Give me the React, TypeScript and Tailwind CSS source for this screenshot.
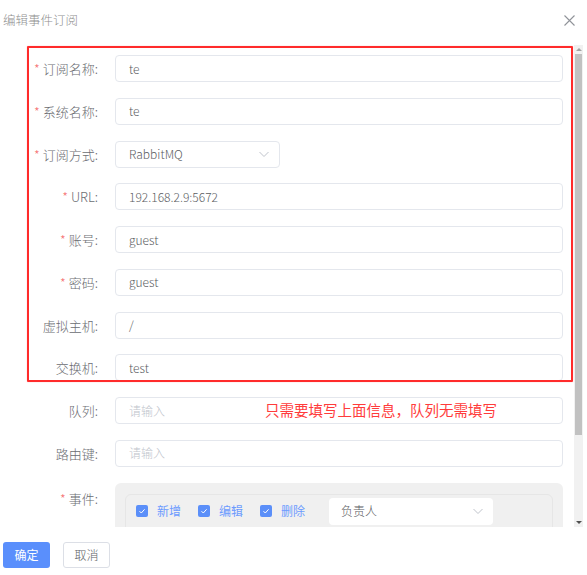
import React from "react";

const font = { fontFamily: '"Noto Sans CJK SC", "Noto Sans", sans-serif' };

function Label({ text, required }: { text: string; required?: boolean }) {
  return (
    <div className="w-[115px] shrink-0 pr-[17px] text-right text-[13px] font-light leading-[27px] text-[#6b6d72]">
      {required && <span className="mr-[3px] text-[#f56c6c]">*</span>}
      {text}:
    </div>
  );
}

function Chevron({ className }: { className?: string }) {
  return (
    <svg className={className} width="12" height="12" viewBox="0 0 12 12" fill="none">
      <path d="M1.5 4 L6 8.5 L10.5 4" stroke="#c0c4cc" strokeWidth="1" />
    </svg>
  );
}

function InputRow({
  label,
  required,
  value,
  placeholder,
  children,
}: {
  label: string;
  required?: boolean;
  value?: string;
  placeholder?: string;
  children?: React.ReactNode;
}) {
  return (
    <div className="flex items-start">
      <Label text={label} required={required} />
      <div className="relative flex h-[27px] w-[448px] items-center rounded-[4px] border border-[#e4e7ed] bg-white px-[13px] text-[12px] font-light">
        {value ? (
          <span className="text-[#5a5c61]">{value}</span>
        ) : (
          <span className="text-[#c0c4cc]">{placeholder}</span>
        )}
        {children}
      </div>
    </div>
  );
}

function Check({ text }: { text: string }) {
  return (
    <div className="flex items-center">
      <div className="flex h-[12px] w-[12px] items-center justify-center rounded-[2px] bg-[#5b8ff9]">
        <svg width="8" height="8" viewBox="0 0 8 8" fill="none">
          <path d="M1.5 4.2 L3.3 6 L6.6 2.3" stroke="white" strokeWidth="1" />
        </svg>
      </div>
      <span className="ml-[9px] text-[12px] text-[#6c9bff]">{text}</span>
    </div>
  );
}

export default function App() {
  return (
    <div className="relative h-[575px] w-[587px] overflow-hidden bg-white" style={font}>
      {/* header */}
      <div className="flex h-[45px] items-start justify-between pt-[11px] pl-[3px] pr-[12px]">
        <span className="text-[12.5px] font-light leading-[18px] text-[#8f8f8f]">编辑事件订阅</span>
        <svg className="mt-[4px]" width="11" height="11" viewBox="0 0 11 11" fill="none">
          <path d="M0.5 0.5 L10.5 10.5 M10.5 0.5 L0.5 10.5" stroke="#909399" strokeWidth="1.1" />
        </svg>
      </div>

      {/* body */}
      <div className="flex h-[482px]">
        <div className="relative w-[574px] overflow-hidden">
          <div className="flex flex-col gap-[15.78px] pt-[10px]">
            <InputRow label="订阅名称" required value="te" />
            <InputRow label="系统名称" required value="te" />
            <div className="flex items-start">
              <Label text="订阅方式" required />
              <div className="flex h-[27px] w-[165px] items-center justify-between rounded-[4px] border border-[#e4e7ed] bg-white pl-[13px] pr-[9px] text-[12px] font-light text-[#5a5c61]">
                <span>RabbitMQ</span>
                <Chevron />
              </div>
            </div>
            <InputRow label="URL" required value="192.168.2.9:5672" />
            <InputRow label="账号" required value="guest" />
            <InputRow label="密码" required value="guest" />
            <InputRow label="虚拟主机" value="/" />
            <InputRow label="交换机" value="test" />
            <InputRow label="队列" placeholder="请输入">
              <span className="absolute left-[149px] top-[2px] text-[14.5px] font-normal leading-[20px] text-[#ff3b3b]">
                只需要填写上面信息，队列无需填写
              </span>
            </InputRow>
            <InputRow label="路由键" placeholder="请输入" />
            <div className="flex items-start">
              <div className="pt-[2px]">
                <Label text="事件" required />
              </div>
              <div className="w-[448px] rounded-[6px] bg-[#f0f0f0] px-[10px] pt-[11px] pb-[10px]">
                <div className="flex h-[60px] items-start rounded-[6px] border border-[#e6e6e6] px-[10px] pt-[3px]">
                  <div className="flex h-[27px] items-center gap-[17px]">
                    <Check text="新增" />
                    <Check text="编辑" />
                    <Check text="删除" />
                  </div>
                  <div className="ml-[24px] flex h-[27px] w-[164px] items-center justify-between rounded-[4px] bg-white pl-[12px] pr-[9px] text-[12px] font-light text-[#5a5c61]">
                    <span>负责人</span>
                    <Chevron />
                  </div>
                </div>
              </div>
            </div>
          </div>
          {/* red annotation box */}
          <div className="pointer-events-none absolute left-[27px] top-[1px] h-[336px] w-[546px] rounded-[1px] border-2 border-[#ff2b2b] shadow-[0_0_1px_#ff8080]" />
        </div>

        {/* scrollbar */}
        <div className="flex w-[9px] flex-col items-center bg-[#f1f1f1]">
          <div className="flex h-[9px] w-full items-center justify-center">
            <div className="h-0 w-0 border-x-[3px] border-b-[3px] border-x-transparent border-b-[#a3a3a3]" />
          </div>
          <div className="h-[381px] w-[7px] bg-[#c1c1c1]" />
          <div className="flex-1" />
          <div className="flex h-[9px] w-full items-center justify-center">
            <div className="h-0 w-0 border-x-[3px] border-t-[3px] border-x-transparent border-t-[#505050]" />
          </div>
        </div>
      </div>

      {/* footer */}
      <div className="flex gap-[13px] pt-[15px] pl-[3px]">
        <button className="h-[26px] w-[47px] rounded-[3px] bg-[#5a8ffc] text-[12px] text-white">确定</button>
        <button className="h-[26px] w-[47px] rounded-[3px] border border-[#dcdfe6] bg-white text-[12px] font-light text-[#606266]">取消</button>
      </div>
    </div>
  );
}
